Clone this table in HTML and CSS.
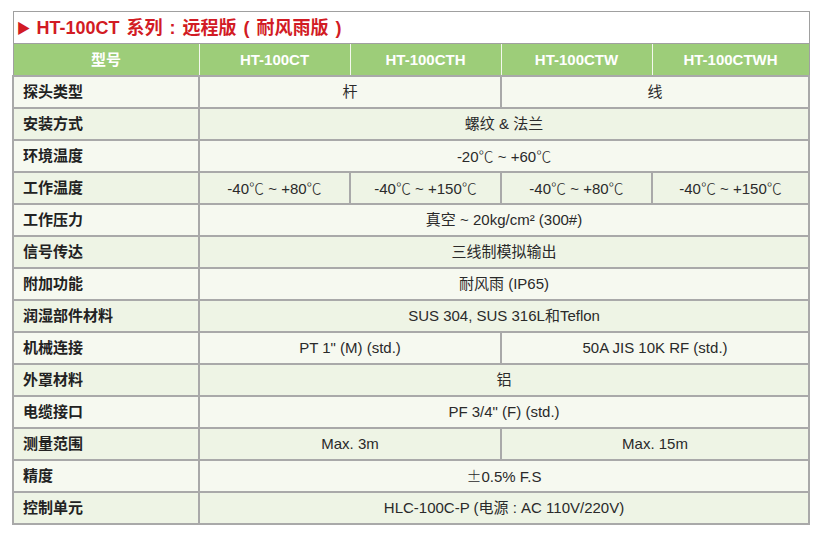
FILE: index.html
```html
<!DOCTYPE html>
<html lang="zh">
<head>
<meta charset="utf-8">
<title>HT-100CT 系列</title>
<link rel="stylesheet" href="styles.css">
</head>
<body>
<table class="spec">
  <colgroup>
    <col class="c-label">
    <col class="c-model">
    <col class="c-model">
    <col class="c-model">
    <col class="c-model-last">
  </colgroup>
  <tr class="title-row">
    <td colspan="5"><span class="tri">&#9654;</span>HT-100CT 系列 : 远程版 ( 耐风雨版 )</td>
  </tr>
  <tr class="head-row">
    <th>型号</th><th>HT-100CT</th><th>HT-100CTH</th><th>HT-100CTW</th><th>HT-100CTWH</th>
  </tr>
  <tr class="odd"><th>探头类型</th><td colspan="2">杆</td><td colspan="2">线</td></tr>
  <tr class="even"><th>安装方式</th><td colspan="4">螺纹 &amp; 法兰</td></tr>
  <tr class="odd"><th>环境温度</th><td colspan="4">-20<span class="cjk">℃</span> ~ +60<span class="cjk">℃</span></td></tr>
  <tr class="even"><th>工作温度</th><td>-40<span class="cjk">℃</span> ~ +80<span class="cjk">℃</span></td><td>-40<span class="cjk">℃</span> ~ +150<span class="cjk">℃</span></td><td>-40<span class="cjk">℃</span> ~ +80<span class="cjk">℃</span></td><td>-40<span class="cjk">℃</span> ~ +150<span class="cjk">℃</span></td></tr>
  <tr class="odd"><th>工作压力</th><td colspan="4">真空 ~ 20kg/cm² (300#)</td></tr>
  <tr class="even"><th>信号传达</th><td colspan="4">三线制模拟输出</td></tr>
  <tr class="odd"><th>附加功能</th><td colspan="4">耐风雨 (IP65)</td></tr>
  <tr class="even"><th>润湿部件材料</th><td colspan="4">SUS 304, SUS 316L和Teflon</td></tr>
  <tr class="odd"><th>机械连接</th><td colspan="2">PT 1" (M) (std.)</td><td colspan="2">50A JIS 10K RF (std.)</td></tr>
  <tr class="even"><th>外罩材料</th><td colspan="4">铝</td></tr>
  <tr class="odd"><th>电缆接口</th><td colspan="4">PF 3/4" (F) (std.)</td></tr>
  <tr class="even"><th>测量范围</th><td colspan="2">Max. 3m</td><td colspan="2">Max. 15m</td></tr>
  <tr class="odd"><th>精度</th><td colspan="4"><span class="cjk">±</span>0.5% F.S</td></tr>
  <tr class="even"><th>控制单元</th><td colspan="4">HLC-100C-P (电源 : AC 110V/220V)</td></tr>
</table>
</body>
</html>
```

FILE: styles.css
```css
html, body {
  margin: 0;
  padding: 0;
  background: #ffffff;
}
body {
  padding: 11px 0 0 12px;
  font-family: "Liberation Sans", "Noto Sans CJK SC", sans-serif;
  color: #262626;
}
.spec {
  width: 796px;
  border-collapse: collapse;
  table-layout: fixed;
  border: 1px solid #a0a0a0;
}
.c-label { width: 186px; }
.c-model { width: 151px; }
.c-model-last { width: 157px; }

.spec td, .spec th {
  height: 30px;
  padding: 0;
  border: 2px solid #a9a9a9;
  font-size: 15px;
  line-height: 18px;
}
.cjk {
  font-family: "Noto Sans CJK SC", sans-serif;
  font-weight: 300;
}
.title-row td {
  height: 31px;
  background: #ffffff;
  color: #d21b24;
  font-weight: bold;
  font-size: 18px;
  word-spacing: 2px;
  text-align: left;
  padding-left: 3px;
  border: 1px solid #a0a0a0;
}
.tri {
  font-size: 14px;
  display: inline-block;
  width: 20px;
  vertical-align: 1px;
}
.head-row th {
  height: 31px;
  background: #9dcd79;
  color: #ffffff;
  font-weight: bold;
  text-align: center;
  border: 1px solid #f4f8ee;
  border-top-color: #a0a0a0;
}
.head-row th:first-child { border-left-color: #a0a0a0; }
.head-row th:last-child { border-right-color: #a0a0a0; }

.spec tr.odd { background: #f6f9f0; }
.spec tr.even { background: #eef4e5; }

.spec tr.odd th, .spec tr.even th {
  text-align: left;
  padding-left: 9px;
  font-weight: bold;
  color: #222222;
}
.spec tr.odd td, .spec tr.even td {
  text-align: center;
  font-weight: normal;
  color: #2a2a2a;
}
```
